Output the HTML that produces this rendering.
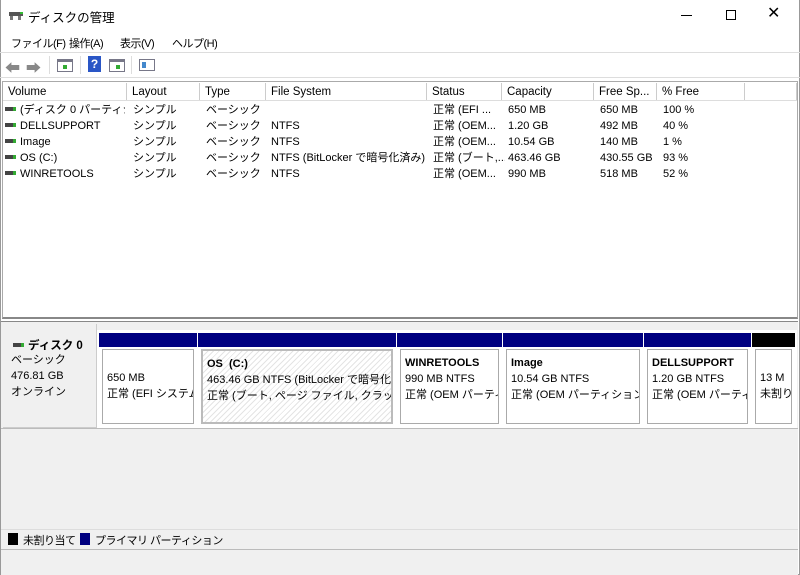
<!DOCTYPE html>
<html><head><meta charset="utf-8"><style>
*{margin:0;padding:0;box-sizing:border-box}
body{width:800px;height:575px;position:relative;background:#fff;font-family:"Liberation Sans","Noto Sans CJK JP",sans-serif;font-size:11px;color:#000;overflow:hidden}
.a{position:absolute;white-space:nowrap;overflow:hidden}
.hd{position:absolute;top:83px;height:18px;border-right:1px solid #ccc;padding-left:5px;line-height:19px;background:#fff;font-size:11.5px}
.row{position:absolute;left:5px;height:16px;line-height:16px}
.row span{position:absolute;white-space:nowrap;overflow:hidden}
.c0{left:0;width:120px}.c1{left:128px;width:70px}.c2{left:201px;width:64px}.c3{left:266px;width:159px}.c4{left:428px;width:72px}.c5{left:503px;width:90px}.c6{left:595px;width:62px}.c7{left:658px}
.di{display:inline-block;width:11px;height:4px;background:#444;border-right:3px solid #3a3;margin-right:4px;vertical-align:middle;position:relative;top:-1px}
.p{position:absolute;top:333px;height:94px;background:#fff}
.p .bar{height:14px;background:#000080}
.p .box{position:absolute;top:16px;left:3px;right:3px;bottom:3px;border:1px solid #aaa;padding:5px 0 0 4px;line-height:16px;overflow:hidden;white-space:nowrap}
</style></head><body>
<div class="a" style="left:0;top:0;width:800px;height:575px;border:1px solid #999;border-top:none"></div>
<div class="a" style="left:9px;top:9px;width:14px;height:11px"><div style="position:absolute;left:0;top:3px;width:14px;height:4px;background:#555"></div><div style="position:absolute;left:1px;top:7px;width:3px;height:4px;background:#777"></div><div style="position:absolute;left:9px;top:7px;width:3px;height:4px;background:#777"></div><div style="position:absolute;left:11px;top:3px;width:3px;height:2px;background:#3b3"></div></div>
<div class="a" style="left:28px;top:7px;font-size:12.5px">ディスクの管理</div>
<div class="a" style="left:681px;top:15px;width:11px;height:1px;background:#000"></div>
<div class="a" style="left:726px;top:10px;width:10px;height:10px;border:1px solid #000"></div>
<div class="a" style="left:767px;top:4px;font-size:16px;line-height:20px">✕</div>
<div class="a" style="left:11px;top:35px;letter-spacing:-0.5px">ファイル(F)</div>
<div class="a" style="left:69px;top:35px;letter-spacing:-0.5px">操作(A)</div>
<div class="a" style="left:120px;top:35px;letter-spacing:-0.5px">表示(V)</div>
<div class="a" style="left:172px;top:35px;letter-spacing:-0.5px">ヘルプ(H)</div>
<div class="a" style="left:0;top:52px;width:800px;height:1px;background:#ddd"></div>
<div class="a" style="left:5px;top:57px;font-size:15px;color:#888">⬅</div>
<div class="a" style="left:26px;top:57px;font-size:15px;color:#888">➡</div>
<div class="a" style="left:49px;top:56px;width:1px;height:18px;background:#ddd"></div>
<div class="a" style="left:57px;top:59px;width:16px;height:13px;border:1px solid #778;border-top:3px solid #778"><div style="position:absolute;left:5px;top:3px;width:4px;height:4px;background:#3a3"></div></div>
<div class="a" style="left:80px;top:56px;width:1px;height:18px;background:#ddd"></div>
<div class="a" style="left:88px;top:56px;width:13px;height:16px;background:#2a56c6;color:#fff;font-size:12px;font-weight:bold;text-align:center;line-height:16px">?</div>
<div class="a" style="left:109px;top:59px;width:16px;height:13px;border:1px solid #778;border-top:3px solid #778"><div style="position:absolute;left:6px;top:3px;width:4px;height:4px;background:#3a3"></div></div>
<div class="a" style="left:131px;top:56px;width:1px;height:18px;background:#ddd"></div>
<div class="a" style="left:139px;top:59px;width:16px;height:12px;border:1px solid #778;background:#fff"><div style="position:absolute;left:2px;top:2px;width:4px;height:6px;background:#48c"></div></div>
<div class="a" style="left:0;top:77px;width:800px;height:1px;background:#ddd"></div>
<div class="a" style="left:2px;top:81px;width:796px;height:238px;border:1px solid #aaa;border-bottom:2px solid #888"></div>
<div class="hd" style="left:3px;width:124px">Volume</div>
<div class="hd" style="left:127px;width:73px">Layout</div>
<div class="hd" style="left:200px;width:66px">Type</div>
<div class="hd" style="left:266px;width:161px">File System</div>
<div class="hd" style="left:427px;width:75px">Status</div>
<div class="hd" style="left:502px;width:92px">Capacity</div>
<div class="hd" style="left:594px;width:63px">Free Sp...</div>
<div class="hd" style="left:657px;width:88px">% Free</div>
<div class="hd" style="left:745px;width:52px"></div>
<div class="a" style="left:3px;top:100px;width:794px;height:1px;background:#ddd"></div>
<div class="row" style="top:102px"><span class="c0"><i class="di"></i>(ディスク 0 パーティショ...</span><span class="c1">シンプル</span><span class="c2">ベーシック</span><span class="c4">正常 (EFI ...</span><span class="c5">650 MB</span><span class="c6">650 MB</span><span class="c7">100 %</span></div>
<div class="row" style="top:118px"><span class="c0"><i class="di"></i>DELLSUPPORT</span><span class="c1">シンプル</span><span class="c2">ベーシック</span><span class="c3">NTFS</span><span class="c4">正常 (OEM...</span><span class="c5">1.20 GB</span><span class="c6">492 MB</span><span class="c7">40 %</span></div>
<div class="row" style="top:134px"><span class="c0"><i class="di"></i>Image</span><span class="c1">シンプル</span><span class="c2">ベーシック</span><span class="c3">NTFS</span><span class="c4">正常 (OEM...</span><span class="c5">10.54 GB</span><span class="c6">140 MB</span><span class="c7">1 %</span></div>
<div class="row" style="top:150px"><span class="c0"><i class="di"></i>OS (C:)</span><span class="c1">シンプル</span><span class="c2">ベーシック</span><span class="c3">NTFS (BitLocker で暗号化済み)</span><span class="c4">正常 (ブート,...</span><span class="c5">463.46 GB</span><span class="c6">430.55 GB</span><span class="c7">93 %</span></div>
<div class="row" style="top:166px"><span class="c0"><i class="di"></i>WINRETOOLS</span><span class="c1">シンプル</span><span class="c2">ベーシック</span><span class="c3">NTFS</span><span class="c4">正常 (OEM...</span><span class="c5">990 MB</span><span class="c6">518 MB</span><span class="c7">52 %</span></div>
<div class="a" style="left:1px;top:321px;width:797px;height:208px;background:#f0f0f0;border-top:1px solid #888"></div>
<div class="a" style="left:3px;top:324px;width:94px;height:104px;background:#f0f0f0;border-right:1px solid #ccc;border-bottom:1px solid #ccc"></div>
<div class="a" style="left:1px;top:428px;width:797px;height:1px;background:#bbb"></div>
<div class="a" style="left:13px;top:337px;font-weight:bold;font-size:11.5px"><i class="di"></i>ディスク 0</div>
<div class="a" style="left:11px;top:352px;line-height:16px">ベーシック<br>476.81 GB<br>オンライン</div>
<div class="a" style="left:97px;top:330px;width:700px;height:98px;background:#fff"></div>
<div class="p" style="left:99px;width:98px"><div class="bar"></div><div class="box" style="padding-top:20px">650 MB<br>正常 (EFI システム</div></div>
<div class="p" style="left:198px;width:198px"><div class="bar"></div><div class="box" style="border:2px solid #bbb;background:repeating-linear-gradient(135deg,#fff 0 3px,#e4e4e4 3px 4px)"><b>OS&nbsp; (C:)</b><br>463.46 GB NTFS (BitLocker で暗号化済<br>正常 (ブート, ページ ファイル, クラッシュ ダン</div></div>
<div class="p" style="left:397px;width:105px"><div class="bar"></div><div class="box"><b>WINRETOOLS</b><br>990 MB NTFS<br>正常 (OEM パーティ</div></div>
<div class="p" style="left:503px;width:140px"><div class="bar"></div><div class="box"><b>Image</b><br>10.54 GB NTFS<br>正常 (OEM パーティション)</div></div>
<div class="p" style="left:644px;width:107px"><div class="bar"></div><div class="box"><b>DELLSUPPORT</b><br>1.20 GB NTFS<br>正常 (OEM パーティシ</div></div>
<div class="p" style="left:752px;width:43px"><div class="bar" style="background:#000"></div><div class="box" style="padding-top:20px">13 M<br>未割り</div></div>
<div class="a" style="left:1px;top:529px;width:797px;height:20px;background:#f0f0f0;border-top:1px solid #ddd"></div>
<div class="a" style="left:8px;top:533px;width:10px;height:12px;background:#000"></div>
<div class="a" style="left:23px;top:532px;letter-spacing:-0.5px">未割り当て</div>
<div class="a" style="left:80px;top:533px;width:10px;height:12px;background:#000080"></div>
<div class="a" style="left:95px;top:532px;letter-spacing:-0.5px">プライマリ パーティション</div>
<div class="a" style="left:1px;top:549px;width:797px;height:26px;background:#f0f0f0;border-top:1px solid #bbb"></div>
</body></html>
